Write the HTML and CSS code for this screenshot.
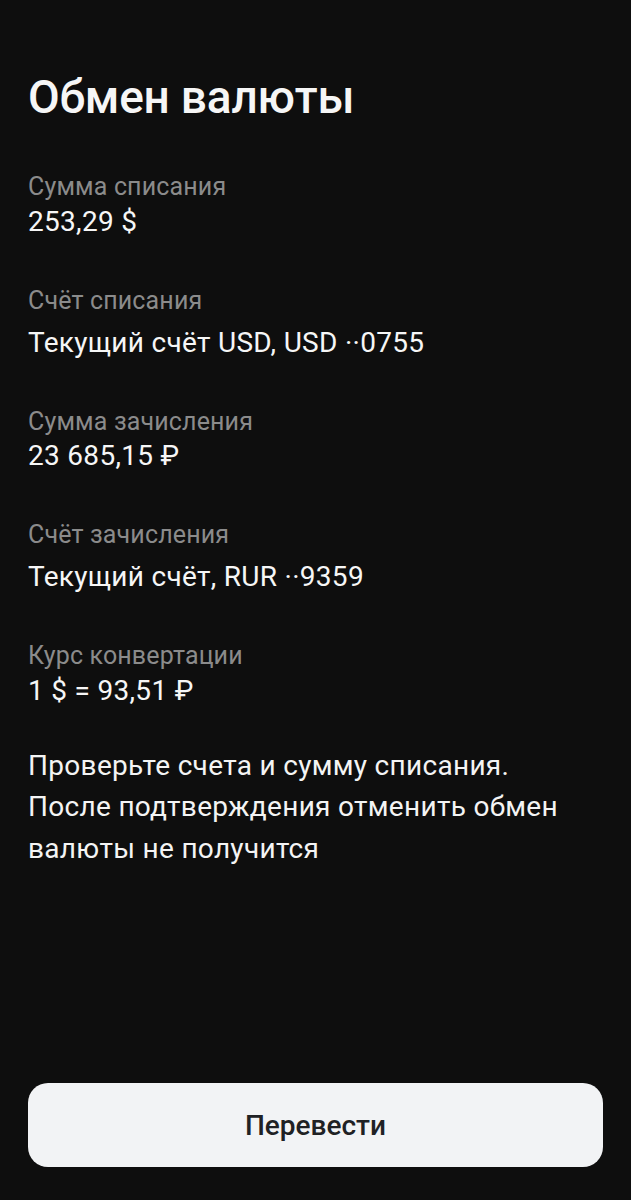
FILE: index.html
```html
<!DOCTYPE html>
<html lang="ru">
<head>
<meta charset="utf-8">
<title>Обмен валюты</title>
<link rel="stylesheet" href="styles.css">
</head>
<body>
<main class="page">
  <h1 class="title">Обмен валюты</h1>
  <section class="details">
    <div class="row">
      <div class="label">Сумма списания</div>
      <div class="value">253,29 $</div>
    </div>
    <div class="row">
      <div class="label">Счёт списания</div>
      <div class="value account">Текущий счёт USD, USD ··0755</div>
    </div>
    <div class="row">
      <div class="label">Сумма зачисления</div>
      <div class="value">23 685,15 ₽</div>
    </div>
    <div class="row">
      <div class="label">Счёт зачисления</div>
      <div class="value account">Текущий счёт, RUR ··9359</div>
    </div>
    <div class="row">
      <div class="label">Курс конвертации</div>
      <div class="value">1 $ = 93,51 ₽</div>
    </div>
  </section>
  <p class="note">Проверьте счета и сумму списания.<br>После подтверждения отменить обмен валюты не получится</p>
  <button class="submit" type="button">Перевести</button>
</main>
</body>
</html>
```

FILE: styles.css
```css
html, body {
  margin: 0;
  padding: 0;
  background: #0e0e0e;
}
body {
  font-family: Roboto, "Noto Sans", sans-serif;
  color: #f4f4f4;
}
.page {
  box-sizing: border-box;
  min-height: 1200px;
  padding: 70px 28px 33px;
  display: flex;
  flex-direction: column;
}
.title {
  margin: 0;
  font-size: 46px;
  line-height: 54px;
  font-weight: 500;
  letter-spacing: -0.2px;
  color: #f6f6f6;
}
.details {
  margin-top: 48px;
  display: flex;
  flex-direction: column;
  gap: 46px;
}
.label {
  font-size: 25px;
  line-height: 30px;
  color: #8b8b8b;
  letter-spacing: 0.15px;
}
.value {
  margin-top: 1.5px;
  font-size: 28px;
  line-height: 36px;
  letter-spacing: 0.3px;
  color: #f6f6f6;
}
.value.account {
  margin-top: 9px;
}
.note {
  margin: 36px 0 0;
  font-size: 28px;
  line-height: 41.5px;
  letter-spacing: 0.3px;
  color: #f4f4f4;
}
.submit {
  margin-top: auto;
  height: 84px;
  width: 100%;
  border: none;
  border-radius: 20px;
  background: #f2f3f5;
  color: #202124;
  font-family: Roboto, "Noto Sans", sans-serif;
  font-size: 28px;
  font-weight: 500;
}
```
